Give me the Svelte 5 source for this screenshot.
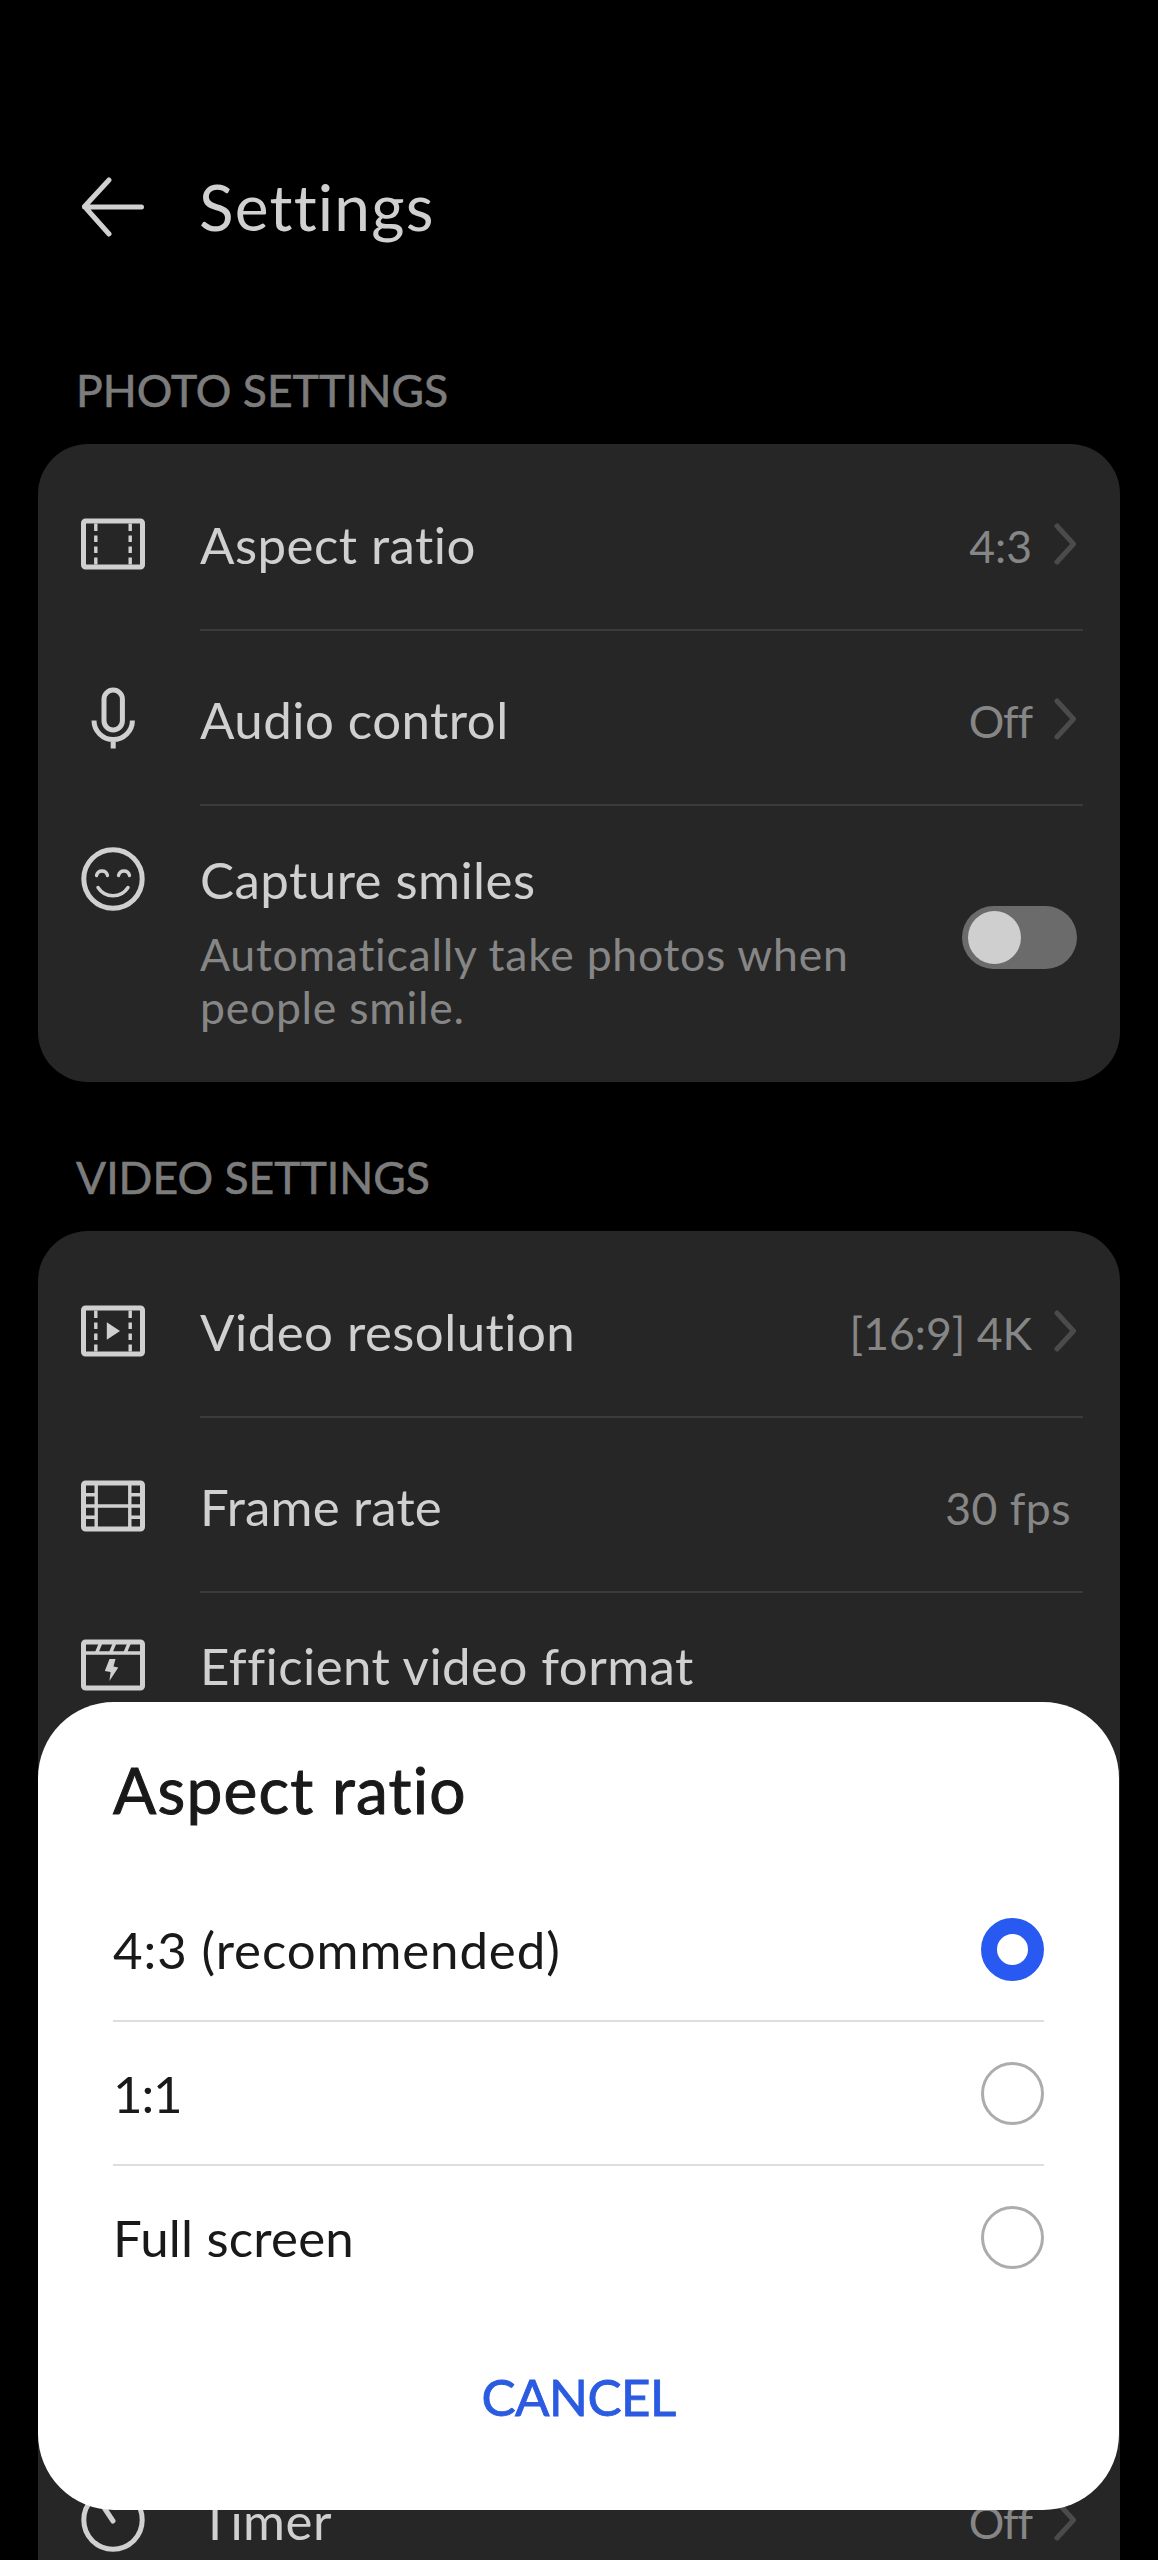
<script lang="ts">
	type Row = {
		id: string;
		icon: string;
		label: string;
		value?: string;
		chevron?: boolean;
		sub?: string;
	};

	const photoRows: Row[] = [
		{ id: 'aspect', icon: 'aspect', label: 'Aspect ratio', value: '4:3', chevron: true },
		{ id: 'audio', icon: 'mic', label: 'Audio control', value: 'Off', chevron: true },
		{
			id: 'smiles',
			icon: 'smile',
			label: 'Capture smiles',
			sub: 'Automatically take photos when people smile.'
		}
	];

	const videoRows: Row[] = [
		{ id: 'resolution', icon: 'video', label: 'Video resolution', value: '[16:9] 4K', chevron: true },
		{ id: 'fps', icon: 'film', label: 'Frame rate', value: '30 fps' },
		{ id: 'efficient', icon: 'clapper', label: 'Efficient video format' },
		{ id: 'timer', icon: 'timer', label: 'Timer', value: 'Off', chevron: true }
	];

	const options = [
		{ id: 'standard', label: '4:3 (recommended)' },
		{ id: 'square', label: '1:1' },
		{ id: 'full', label: 'Full screen' }
	];

	let selected = $state('standard');
	let captureSmiles = $state(false);
	let sheetOpen = $state(true);
</script>

{#snippet icon(name: string)}
	<svg class="icon" viewBox="0 0 64 64" aria-hidden="true">
		{#if name === 'aspect' || name === 'video'}
			<rect x="2.5" y="9" width="59" height="46" rx="2" />
			<path class="thin" d="M14.8 11.5v41M49.2 11.5v41" stroke-dasharray="7.5 4.5 6.5 4.5 6.5 4.5 7.5" />
			{#if name === 'video'}
				<path class="solid" d="M25.8 23.2v17.6L39 32z" />
			{/if}
		{:else if name === 'mic'}
			<rect x="23" y="3" width="18.4" height="40" rx="9.2" />
			<path d="M13 33.5a19.2 19 0 0 0 38.4 0M32.2 53v8.5" />
		{:else if name === 'smile'}
			<circle cx="32" cy="32" r="29.2" />
			<path class="thin round" d="M15.5 28.5c1.5-6 9.5-6 11 0M37.5 28.5c1.5-6 9.5-6 11 0M17 40.5c7 11 23 11 30 0" />
		{:else if name === 'film'}
			<rect x="2.5" y="9" width="59" height="46" rx="2" />
			<path class="thin" d="M15.2 10v44M48.8 10v44M15 32h34M4 20.8h11M4 32h11M4 43.2h11M49 20.8h11M49 32h11M49 43.2h11" />
		{:else if name === 'clapper'}
			<rect x="2.5" y="9" width="59" height="46" rx="2" />
			<path class="thin" d="M4 20h56M19.5 10.5l-4 9.5M33.5 10.5l-4 9.5M48 10.5l-4 9.5" />
			<path class="solid" d="M28.5 26h6l-2 7.5 4.8 1L28.4 48l1.2-9-5.8-1z" />
		{:else if name === 'timer'}
			<circle cx="32" cy="32" r="29.2" />
			<path class="round" d="M18 12l14 21" />
		{/if}
	</svg>
{/snippet}

{#snippet row(item: Row)}
	<div class="row {item.id}">
		{@render icon(item.icon)}
		<div class="body">
			<div class="text">
				<span class="label">{item.label}</span>
				{#if item.sub}<span class="sub">{item.sub}</span>{/if}
			</div>
			{#if item.value}<span class="value" class:off={item.value === 'Off'}>{item.value}</span>{/if}
			{#if item.chevron}
				<svg class="chevron" viewBox="0 0 22 42" aria-hidden="true"><path d="M3 3l16.5 18L3 39" /></svg>
			{/if}
			{#if item.sub}
				<button
					class="switch"
					class:on={captureSmiles}
					role="switch"
					aria-checked={captureSmiles}
					aria-label={item.label}
					onclick={() => (captureSmiles = !captureSmiles)}
				>
					<span class="knob"></span>
				</button>
			{/if}
		</div>
	</div>
{/snippet}

<div class="screen">
	<header>
		<svg class="back" viewBox="0 0 64 60" aria-hidden="true">
			<path d="M28 3L3.5 29.5L28 57M3.5 30H60.5" />
		</svg>
		<h1>Settings</h1>
	</header>

	<h2 class="photo-title">PHOTO SETTINGS</h2>
	<section class="card">
		{#each photoRows as item (item.id)}
			{@render row(item)}
		{/each}
	</section>

	<h2 class="video-title">VIDEO SETTINGS</h2>
	<section class="card">
		{#each videoRows as item (item.id)}
			{@render row(item)}
		{/each}
	</section>

	{#if sheetOpen}
		<div class="sheet" role="dialog" aria-label="Aspect ratio">
			<h3>Aspect ratio</h3>
			<div class="options" role="radiogroup">
				{#each options as option (option.id)}
					<button
						class="option {option.id}"
						role="radio"
						aria-checked={selected === option.id}
						onclick={() => (selected = option.id)}
					>
						<span class="name">{option.label}</span>
						<span class="radio" class:checked={selected === option.id}></span>
					</button>
				{/each}
			</div>
			<button class="cancel" onclick={() => (sheetOpen = false)}>CANCEL</button>
		</div>
	{/if}
</div>

<style>
	:global(body) {
		margin: 0;
		background: #000;
	}
	.screen {
		position: relative;
		box-sizing: border-box;
		width: 1158px;
		height: 2560px;
		padding: 0 38px;
		overflow: hidden;
		background: #000;
		color: #d0d0d0;
		font-family: Lato, 'Noto Sans', sans-serif;
		font-variant-ligatures: none;
	}
	h1,
	h2,
	h3 {
		margin: 0;
		font-weight: 400;
	}
	button {
		margin: 0;
		padding: 0;
		border: 0;
		background: none;
		color: inherit;
		font: inherit;
		cursor: pointer;
	}
	header {
		display: flex;
		align-items: center;
		gap: 54px;
		height: 100px;
		padding: 157px 0 0 43px;
	}
	.back {
		width: 64px;
		height: 60px;
	}
	.back path {
		fill: none;
		stroke: #d0d0d0;
		stroke-width: 5;
		stroke-linecap: round;
		stroke-linejoin: round;
	}
	h1 {
		font-size: 64px;
		line-height: 76px;
		letter-spacing: 1.2px;
	}
	h2 {
		height: 60px;
		padding-left: 38px;
		color: #7c7c7c;
		font-size: 44.5px;
		line-height: 60px;
		white-space: nowrap;
		-webkit-text-stroke: 0.6px #7c7c7c;
	}
	.photo-title {
		padding-top: 103px;
		padding-bottom: 24px;
	}
	.video-title {
		padding-top: 65px;
		padding-bottom: 24px;
	}
	.card {
		padding: 12px 0;
		border-radius: 50px;
		background: #262626;
	}
	.row {
		display: flex;
		align-items: center;
		height: 175px;
		padding: 0 37px 0 43px;
	}
	.icon {
		flex: none;
		width: 64px;
		height: 64px;
		margin-right: 55px;
		fill: none;
		stroke: #d0d0d0;
		stroke-width: 5;
	}
	.icon .thin {
		stroke-width: 3.4;
	}
	.icon .round {
		stroke-linecap: round;
	}
	.icon .solid {
		fill: #d0d0d0;
		stroke: none;
	}
	.body {
		flex: 1;
		display: flex;
		align-items: center;
		box-sizing: border-box;
		height: 100%;
		padding-top: 2px;
		border-bottom: 2px solid #3b3b3b;
	}
	.text {
		flex: 1;
		display: flex;
		flex-direction: column;
		padding-top: 3px;
	}
	.label {
		font-size: 51px;
		line-height: 62px;
		letter-spacing: 0.45px;
		white-space: nowrap;
	}
	.fps .label {
		letter-spacing: 0.15px;
	}
	.sub {
		width: 700px;
		margin-top: 17px;
		color: #868686;
		font-size: 44.5px;
		line-height: 52.5px;
		letter-spacing: 0.75px;
	}
	.value {
		margin-right: 50px;
		padding-top: 3px;
		color: #868686;
		font-size: 44.5px;
		white-space: nowrap;
	}
	.value.off {
		letter-spacing: -1.1px;
	}
	.fps .value {
		margin-right: 12px;
		letter-spacing: 0.5px;
	}
	.chevron {
		width: 22px;
		height: 42px;
		margin: 0 7px 0 -28px;
		fill: none;
		stroke: #4b4b4b;
		stroke-width: 5;
		stroke-linecap: round;
		stroke-linejoin: round;
	}
	.smiles {
		align-items: flex-start;
		height: 264px;
	}
	.smiles .icon {
		margin-top: 41px;
	}
	.smiles .body {
		align-items: flex-start;
		padding-top: 40px;
		border-bottom: 0;
	}
	.switch {
		width: 115px;
		height: 63px;
		margin: 60px 6px 0 0;
		padding: 5px 6px;
		border-radius: 32px;
		background: #6b6b6b;
	}
	.knob {
		display: block;
		width: 53px;
		height: 53px;
		border-radius: 50%;
		background: #cfcfcf;
	}
	.switch.on {
		background: #2859f0;
	}
	.switch.on .knob {
		margin-left: auto;
	}
	.efficient {
		align-items: flex-start;
		height: 839px;
	}
	.efficient .icon {
		margin-top: 40px;
	}
	.efficient .body {
		align-items: flex-start;
		padding-top: 39px;
	}
	.sheet {
		position: absolute;
		top: 1702px;
		left: 38px;
		box-sizing: border-box;
		width: 1081px;
		height: 808px;
		padding: 50px 75px 0;
		border-radius: 76px;
		background: #fff;
		color: #191919;
	}
	h3 {
		font-size: 64px;
		line-height: 76px;
		letter-spacing: 1.2px;
		white-space: nowrap;
		-webkit-text-stroke: 1px #191919;
	}
	.options {
		margin-top: 50px;
	}
	.option {
		display: flex;
		align-items: center;
		justify-content: space-between;
		box-sizing: border-box;
		width: 100%;
		height: 144px;
		border-bottom: 2px solid #dedede;
		font-size: 51px;
		white-space: nowrap;
	}
	.option:last-child {
		border-bottom-color: transparent;
	}
	.name {
		letter-spacing: 0.2px;
	}
	.standard .name {
		letter-spacing: 0.9px;
	}
	.square .name {
		letter-spacing: -1.2px;
	}
	.radio {
		box-sizing: border-box;
		width: 63px;
		height: 63px;
		border: 3px solid #acacac;
		border-radius: 50%;
	}
	.radio.checked {
		border: 16px solid #2859f0;
	}
	.cancel {
		display: block;
		width: 100%;
		height: 90px;
		margin-top: 41px;
		color: #2a5be0;
		font-size: 51px;
		letter-spacing: -0.5px;
		-webkit-text-stroke: 0.9px #2a5be0;
	}
</style>
